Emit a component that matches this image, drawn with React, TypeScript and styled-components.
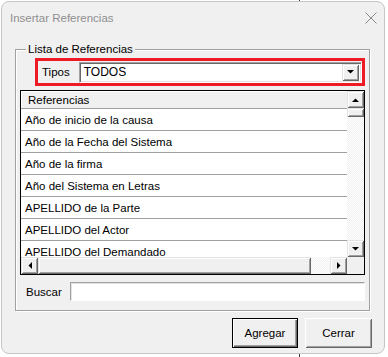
import styled, { createGlobalStyle } from "styled-components";

const GlobalStyle = createGlobalStyle`
  html, body {
    margin: 0;
    padding: 0;
  }
  body {
    background: #ffffff
      linear-gradient(to right, transparent 299px, #3a3a3a 299px, #3a3a3a 300px, transparent 300px);
    font-family: "Liberation Sans", Arial, sans-serif;
    font-size: 11.5px;
    color: #000;
  }
`;

const Page = styled.div`
  padding: 1px 0 0 1px;
  height: 357px;
  box-sizing: border-box;
`;

const Window = styled.div`
  width: 384px;
  height: 353px;
  box-sizing: border-box;
  border: 1px solid #c6c6c6;
  border-radius: 8px;
  background: #f0f0f0;
  display: flex;
  flex-direction: column;
  overflow: hidden;
`;

const TitleBar = styled.div`
  height: 31px;
  display: flex;
  align-items: center;
  justify-content: space-between;
  padding: 0 7px 0 8px;
  color: #8f8f8f;
  font-size: 11.5px;
`;

const CloseIcon = () => (
  <svg width="12" height="12" viewBox="0 0 12 12">
    <path d="M0.5 0.5 L11.5 11.5 M11.5 0.5 L0.5 11.5" stroke="#8a8a8a" strokeWidth="1" />
  </svg>
);

const Body = styled.div`
  flex: 1;
  display: flex;
  flex-direction: column;
  padding: 10px 13px 0 13px;
`;

const Group = styled.fieldset`
  margin: 0;
  padding: 0 4px 0 4px;
  width: 355px;
  height: 268px;
  box-sizing: border-box;
  border: 1px solid #a0a0a0;
  box-shadow: inset 1px 1px #fff, 1px 1px #fff;
  display: flex;
  flex-direction: column;
`;

const Legend = styled.legend`
  margin-left: 6px;
  padding: 0 2px;
  font-size: 11.5px;
  line-height: 13px;
  background: #f0f0f0;
`;

const TypeBox = styled.div`
  margin: 2px 0 0 15px;
  height: 28px;
  box-sizing: border-box;
  border: 3px solid #ed1c24;
  display: flex;
  align-items: center;
  padding: 0 0 0 4px;
  gap: 9px;
  font-size: 11.5px;
`;

const Combo = styled.div`
  flex: 1;
  height: 21px;
  box-sizing: border-box;
  background: #fff;
  border-top: 1px solid #a0a0a0;
  border-left: 1px solid #a0a0a0;
  border-right: 1px solid #fff;
  border-bottom: 1px solid #fff;
  box-shadow: inset 1px 1px #696969, inset -1px -1px #e3e3e3;
  display: flex;
  align-items: center;
  padding: 2px 2px 2px 4px;
  font-size: 12px;
`;

const ComboText = styled.span`
  flex: 1;
`;

const RaisedButton = styled.div<{ $w?: number; $h?: number }>`
  width: ${(p) => p.$w ?? 17}px;
  height: ${(p) => p.$h ?? 17}px;
  box-sizing: border-box;
  background: #f0f0f0;
  box-shadow: inset 1px 1px #e3e3e3, inset -1px -1px #696969, inset 2px 2px #fff,
    inset -2px -2px #a0a0a0;
  display: flex;
  align-items: center;
  justify-content: center;
  flex-shrink: 0;
`;

const Arrow = ({ dir }: { dir: "up" | "down" | "left" | "right" }) => {
  const pts = {
    up: "0,4 7,4 3.5,0.5",
    down: "0,0 7,0 3.5,3.5",
    left: "4,0 4,7 0.5,3.5",
    right: "0,0 0,7 3.5,3.5",
  }[dir];
  const vertical = dir === "up" || dir === "down";
  return (
    <svg width={vertical ? 7 : 4} height={vertical ? 4 : 7}>
      <polygon points={pts} fill="#000" />
    </svg>
  );
};

const List = styled.div`
  margin-top: 4px;
  height: 185px;
  box-sizing: border-box;
  border: 1px solid #000;
  background: #fff;
  display: grid;
  grid-template-columns: 1fr 17px;
  grid-template-rows: 1fr 17px;
`;

const Rows = styled.div`
  overflow: hidden;
  display: flex;
  flex-direction: column;
`;

const HeaderCell = styled.div`
  height: 18px;
  flex-shrink: 0;
  box-sizing: border-box;
  background: #f0f0f0;
  border-bottom: 1px solid #a0a0a0;
  box-shadow: inset 1px 1px #fff;
  padding-left: 7px;
  display: flex;
  align-items: center;
  font-size: 11.5px;
`;

const Row = styled.div`
  height: 22px;
  flex-shrink: 0;
  box-sizing: border-box;
  border-bottom: 1px solid #a0a0a0;
  padding-left: 4px;
  display: flex;
  align-items: center;
  font-size: 11.5px;
  white-space: nowrap;
`;

const dither = `repeating-conic-gradient(#f0f0f0 0 25%, #ffffff 0 50%) 0 0 / 2px 2px`;

const VScroll = styled.div`
  display: flex;
  flex-direction: column;
  background: ${dither};
`;

const HScroll = styled.div`
  display: flex;
  background: ${dither};
`;

const Track = styled.div`
  flex: 1;
`;

const Corner = styled.div`
  background: #f0f0f0;
`;

const SearchRow = styled.div`
  margin-top: 7px;
  display: flex;
  align-items: center;
  gap: 8px;
  padding: 0 0 0 6px;
  font-size: 11.5px;
`;

const SearchInput = styled.div`
  flex: 1;
  height: 19px;
  box-sizing: border-box;
  background: #fff;
  border-top: 1px solid #a0a0a0;
  border-left: 1px solid #a0a0a0;
  border-right: 1px solid #fff;
  border-bottom: 1px solid #fff;
  box-shadow: inset 1px 1px #e3e3e3;
`;

const Footer = styled.div`
  display: flex;
  justify-content: flex-end;
  gap: 7px;
  margin-top: 7px;
  margin-right: -1px;
`;

const PushButton = styled.button<{ $default?: boolean }>`
  width: ${(p) => (p.$default ? 66 : 67)}px;
  height: 30px;
  margin: 0;
  padding: 0;
  font-family: "Liberation Sans", Arial, sans-serif;
  font-size: 11.5px;
  color: #000;
  background: #f0f0f0;
  border: ${(p) => (p.$default ? "1px solid #000" : "none")};
  box-shadow: ${(p) =>
    p.$default
      ? "inset 1px 1px #fff, inset -1px -1px #696969, inset -2px -2px #a0a0a0"
      : "inset 1px 1px #fff, inset -1px -1px #696969, inset 2px 2px #f0f0f0, inset -2px -2px #a0a0a0"};
`;

const items = [
  "Año de inicio de la causa",
  "Año de la Fecha del Sistema",
  "Año de la firma",
  "Año del Sistema en Letras",
  "APELLIDO de la Parte",
  "APELLIDO del Actor",
  "APELLIDO del Demandado",
];

export default function App() {
  return (
    <>
      <GlobalStyle />
      <Page>
        <Window>
          <TitleBar>
            <span>Insertar Referencias</span>
            <CloseIcon />
          </TitleBar>
          <Body>
            <Group>
              <Legend>Lista de Referencias</Legend>
              <TypeBox>
                <span>Tipos</span>
                <Combo>
                  <ComboText>TODOS</ComboText>
                  <RaisedButton $w={17} $h={17}>
                    <Arrow dir="down" />
                  </RaisedButton>
                </Combo>
              </TypeBox>
              <List>
                <Rows>
                  <HeaderCell>Referencias</HeaderCell>
                  {items.map((item) => (
                    <Row key={item}>{item}</Row>
                  ))}
                </Rows>
                <VScroll>
                  <RaisedButton>
                    <Arrow dir="up" />
                  </RaisedButton>
                  <RaisedButton $h={9} />
                  <Track />
                  <RaisedButton>
                    <Arrow dir="down" />
                  </RaisedButton>
                </VScroll>
                <HScroll>
                  <RaisedButton>
                    <Arrow dir="left" />
                  </RaisedButton>
                  <RaisedButton $w={273} />
                  <Track />
                  <RaisedButton>
                    <Arrow dir="right" />
                  </RaisedButton>
                </HScroll>
                <Corner />
              </List>
              <SearchRow>
                <span>Buscar</span>
                <SearchInput />
              </SearchRow>
            </Group>
            <Footer>
              <PushButton $default>Agregar</PushButton>
              <PushButton>Cerrar</PushButton>
            </Footer>
          </Body>
        </Window>
      </Page>
    </>
  );
}
